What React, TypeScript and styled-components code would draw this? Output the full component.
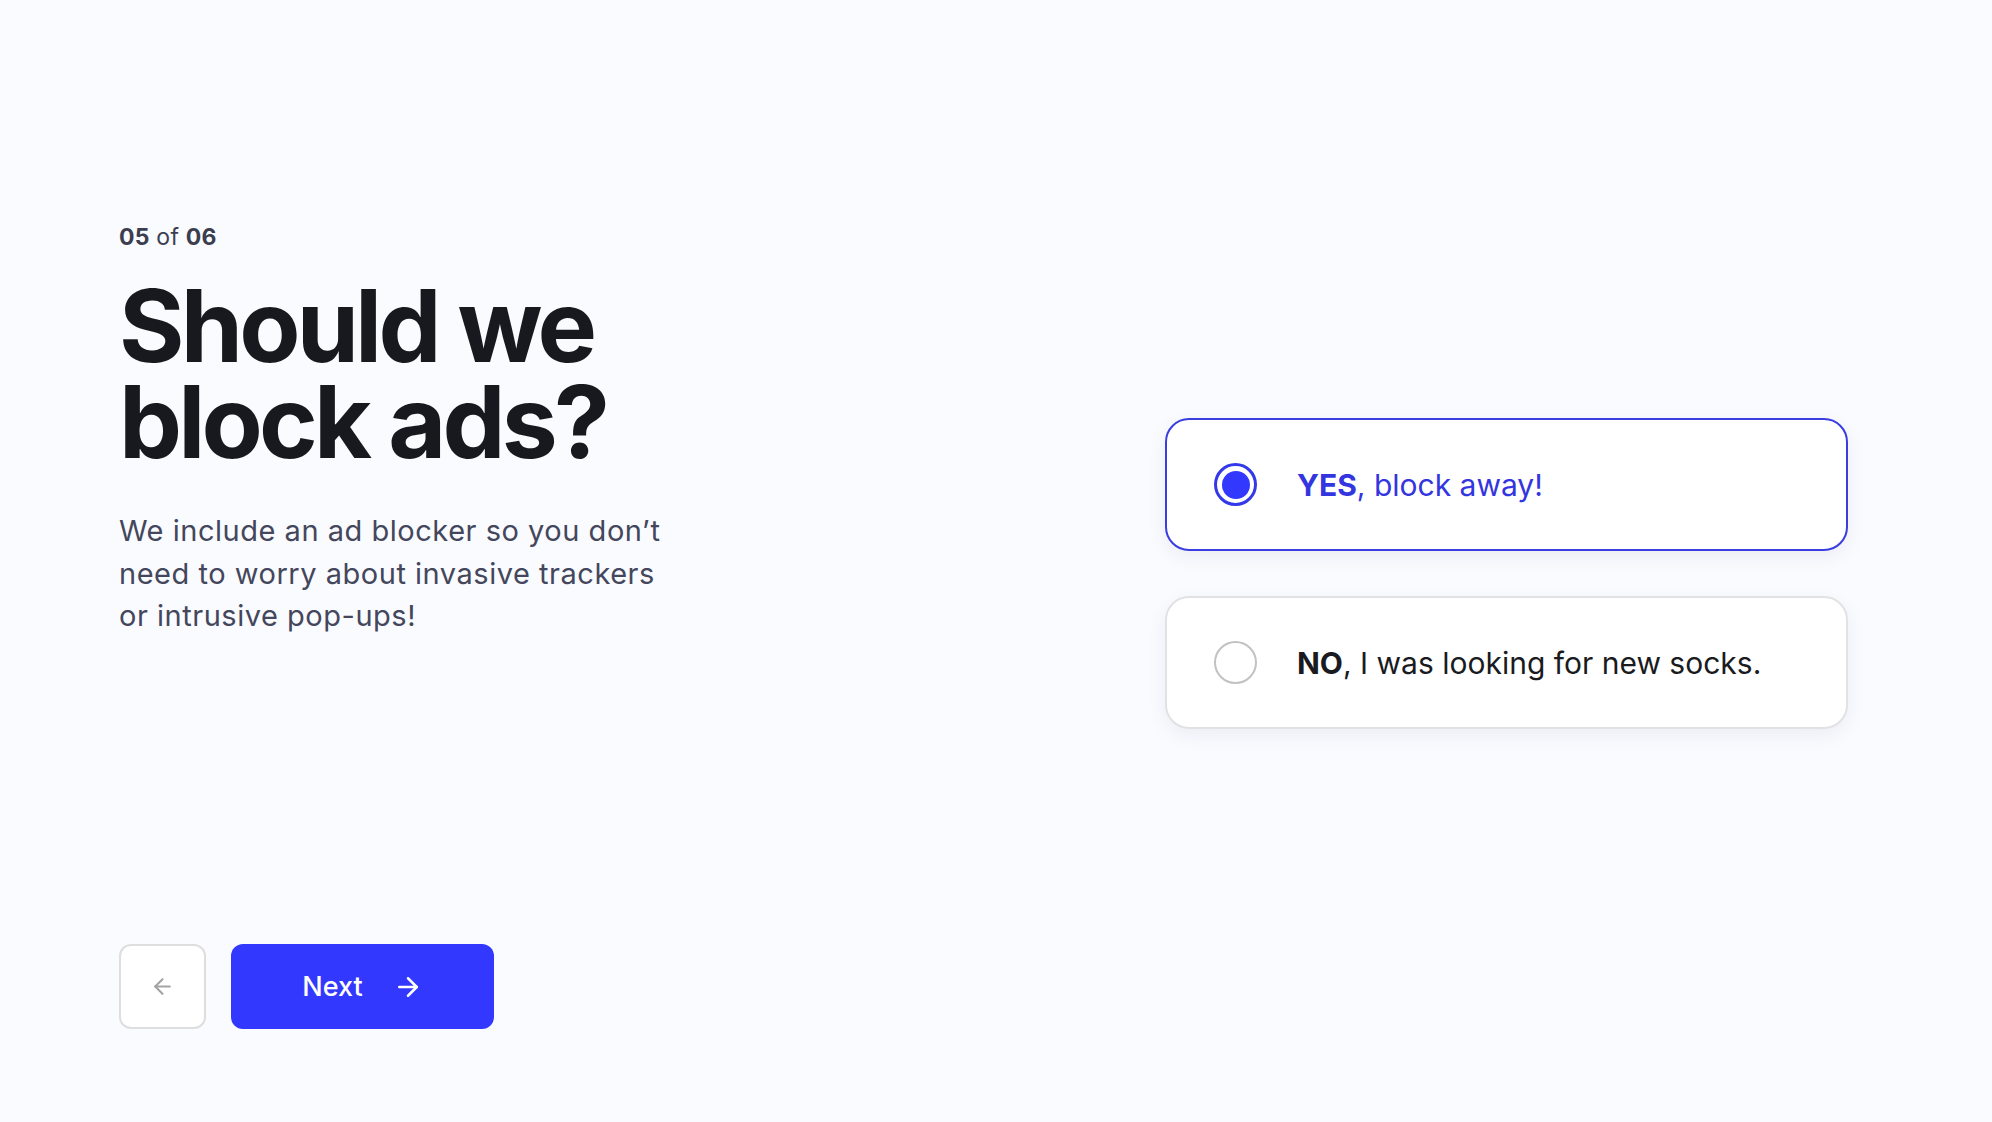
import React, { useState } from "react";
import styled, { createGlobalStyle } from "styled-components";
import { ArrowLeft, ArrowRight } from "lucide-react";

const Global = createGlobalStyle`
  html, body {
    margin: 0;
    padding: 0;
    background: #fafbff;
    font-family: Inter, "Noto Sans", sans-serif;
    -webkit-font-smoothing: antialiased;
  }
  * { box-sizing: border-box; }
`;

const Page = styled.main`
  display: flex;
  justify-content: space-between;
  height: 1122px;
  padding: 222px 144px 93px 119px;
`;

const Intro = styled.section`
  display: flex;
  flex-direction: column;
  width: 600px;
`;

const StepCount = styled.div`
  font-size: 23px;
  line-height: 30px;
  letter-spacing: 0.01em;
  color: #3b3e4f;
  b { font-weight: 700; }
`;

const Title = styled.h1`
  margin: 26px 0 0;
  font-size: 100px;
  line-height: 96px;
  font-weight: 700;
  letter-spacing: -0.038em;
  color: #18191e;
`;

const Lead = styled.p`
  margin: 40px 0 0;
  width: 562px;
  font-size: 29px;
  line-height: 42.5px;
  letter-spacing: 0.018em;
  color: #44475c;
`;

const Nav = styled.div`
  display: flex;
  gap: 25px;
  margin-top: auto;
`;

const BackButton = styled.button`
  width: 87px;
  height: 85px;
  display: flex;
  align-items: center;
  justify-content: center;
  border: 2px solid #dedede;
  border-radius: 12px;
  background: #fff;
  color: #a3a3a3;
  cursor: pointer;
`;

const NextButton = styled.button`
  width: 263px;
  height: 85px;
  display: flex;
  align-items: center;
  justify-content: center;
  gap: 30px;
  border: none;
  border-radius: 12px;
  background: #3338ff;
  color: #fff;
  font-family: inherit;
  font-size: 27px;
  font-weight: 500;
  cursor: pointer;
`;

const Options = styled.section`
  display: flex;
  flex-direction: column;
  gap: 45px;
  width: 683px;
  margin-top: 196px;
`;

const Option = styled.label<{ $selected: boolean }>`
  display: flex;
  align-items: center;
  gap: 40px;
  height: 133px;
  padding: 0 47px;
  background: #fff;
  border: 2.5px solid ${(p) => (p.$selected ? "#3a3de0" : "#e2e2e4")};
  border-radius: 24px;
  box-shadow: 0 6px 20px rgba(20, 24, 60, 0.06);
  cursor: pointer;
`;

const Radio = styled.span<{ $selected: boolean }>`
  flex: 0 0 auto;
  width: 43px;
  height: 43px;
  border-radius: 50%;
  border: ${(p) => (p.$selected ? "3.5px solid #3338e8" : "2.5px solid #c2c2c2")};
  display: flex;
  align-items: center;
  justify-content: center;

  &::after {
    content: "";
    display: ${(p) => (p.$selected ? "block" : "none")};
    width: 28px;
    height: 28px;
    border-radius: 50%;
    background: #3338ff;
  }
`;

const OptionText = styled.span<{ $selected: boolean }>`
  font-size: 30px;
  line-height: 40px;
  color: ${(p) => (p.$selected ? "#3336e0" : "#1a1b21")};
  b { font-weight: 700; }
`;

const CHOICES = [
  { key: "yes", head: "YES", rest: ", block away!" },
  { key: "no", head: "NO", rest: ", I was looking for new socks." },
];

export default function App() {
  const [choice, setChoice] = useState("yes");
  return (
    <>
      <Global />
      <Page>
        <Intro>
          <StepCount>
            <b>05</b> of <b>06</b>
          </StepCount>
          <Title>
            Should we
            <br />
            block ads?
          </Title>
          <Lead>
            We include an ad blocker so you don’t need to worry about invasive
            trackers or intrusive pop-ups!
          </Lead>
          <Nav>
            <BackButton aria-label="Back">
              <ArrowLeft size={25} strokeWidth={2} />
            </BackButton>
            <NextButton>
              Next
              <ArrowRight size={30} strokeWidth={2} />
            </NextButton>
          </Nav>
        </Intro>
        <Options>
          {CHOICES.map((c) => {
            const selected = choice === c.key;
            return (
              <Option key={c.key} $selected={selected} onClick={() => setChoice(c.key)}>
                <Radio $selected={selected} />
                <OptionText $selected={selected}>
                  <b>{c.head}</b>
                  {c.rest}
                </OptionText>
              </Option>
            );
          })}
        </Options>
      </Page>
    </>
  );
}
